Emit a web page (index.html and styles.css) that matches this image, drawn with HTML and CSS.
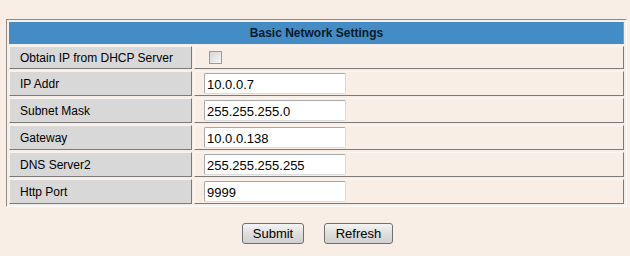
FILE: index.html
```html
<!DOCTYPE html>
<html>
<head>
<meta charset="utf-8">
<link rel="stylesheet" href="styles.css">
</head>
<body>
<div class="page">
  <table class="settings">
    <tr><th colspan="2" class="head">Basic Network Settings</th></tr>
    <tr class="row-check">
      <td class="label">Obtain IP from DHCP Server</td>
      <td class="value"><input type="checkbox" class="check"></td>
    </tr>
    <tr>
      <td class="label">IP Addr</td>
      <td class="value"><input type="text" class="field" value="10.0.0.7"></td>
    </tr>
    <tr>
      <td class="label">Subnet Mask</td>
      <td class="value"><input type="text" class="field" value="255.255.255.0"></td>
    </tr>
    <tr>
      <td class="label">Gateway</td>
      <td class="value"><input type="text" class="field" value="10.0.0.138"></td>
    </tr>
    <tr>
      <td class="label">DNS Server2</td>
      <td class="value"><input type="text" class="field" value="255.255.255.255"></td>
    </tr>
    <tr>
      <td class="label">Http Port</td>
      <td class="value"><input type="text" class="field" value="9999"></td>
    </tr>
  </table>
  <div class="actions">
    <button class="btn btn-submit">Submit</button>
    <button class="btn btn-refresh">Refresh</button>
  </div>
</div>
</body>
</html>
```

FILE: styles.css
```css
html, body {
  margin: 0;
  padding: 0;
  background: #f9eee5;
}
body {
  font-family: "Liberation Sans", Arial, sans-serif;
  font-size: 12px;
  color: #000;
}
.page {
  padding: 19px 4px 0 6px;
}
.settings {
  width: 621px;
  border-collapse: separate;
  border-spacing: 2px;
  border: 1px solid;
  border-color: #8c8c8c #fdfdfd #fdfdfd #8c8c8c;
}
.settings td, .settings th {
  padding: 0;
  box-sizing: border-box;
}
.head {
  height: 22px;
  background: #438cc5;
  border: 1px solid #438cc5;
  border-right-color: #6ea3cf;
  font-weight: bold;
  font-size: 12px;
  color: #0d1a2b;
  text-align: center;
  vertical-align: middle;
}
.label {
  width: 183px;
  height: 25px;
  background: #d8d8d8;
  border: 1px solid;
  border-color: #f4f4f4 #7a7a7a #7a7a7a #f4f4f4;
  padding-left: 10px !important;
  vertical-align: middle;
}
.value {
  height: 25px;
  border: 1px solid;
  border-color: #fbf6f2 #7a7a7a #7a7a7a #fbf6f2;
  padding-left: 9px !important;
  vertical-align: middle;
}
.row-check .label, .row-check .value {
  height: 23px;
}
.check {
  appearance: none;
  -webkit-appearance: none;
  display: block;
  width: 13px;
  height: 13px;
  margin: 0 0 0 5px;
  border: 1px solid #9a9a9a;
  background: linear-gradient(135deg, #d4d4d4, #f6f6f6);
  box-sizing: border-box;
}
.field {
  display: block;
  width: 142px;
  height: 21px;
  margin: 0;
  box-sizing: border-box;
  border: 1px solid;
  border-color: #a9a9a9 #dcdcdc #dcdcdc #a9a9a9;
  border-radius: 2px;
  background: #fff;
  padding: 1px 2px 0 2px;
  font-family: "Liberation Sans", Arial, sans-serif;
  font-size: 13px;
  color: #000;
}
.actions {
  display: flex;
  justify-content: center;
  gap: 20px;
  margin-top: 16px;
  padding-left: 3px;
}
.btn {
  height: 21px;
  box-sizing: border-box;
  border: 1px solid #707070;
  border-radius: 3px;
  background: linear-gradient(#f4f4f4, #dedede 50%, #d0d0d0);
  font-family: "Liberation Sans", Arial, sans-serif;
  font-size: 13px;
  color: #000;
  padding: 0;
}
.btn-submit { width: 62px; }
.btn-refresh { width: 69px; }
```
